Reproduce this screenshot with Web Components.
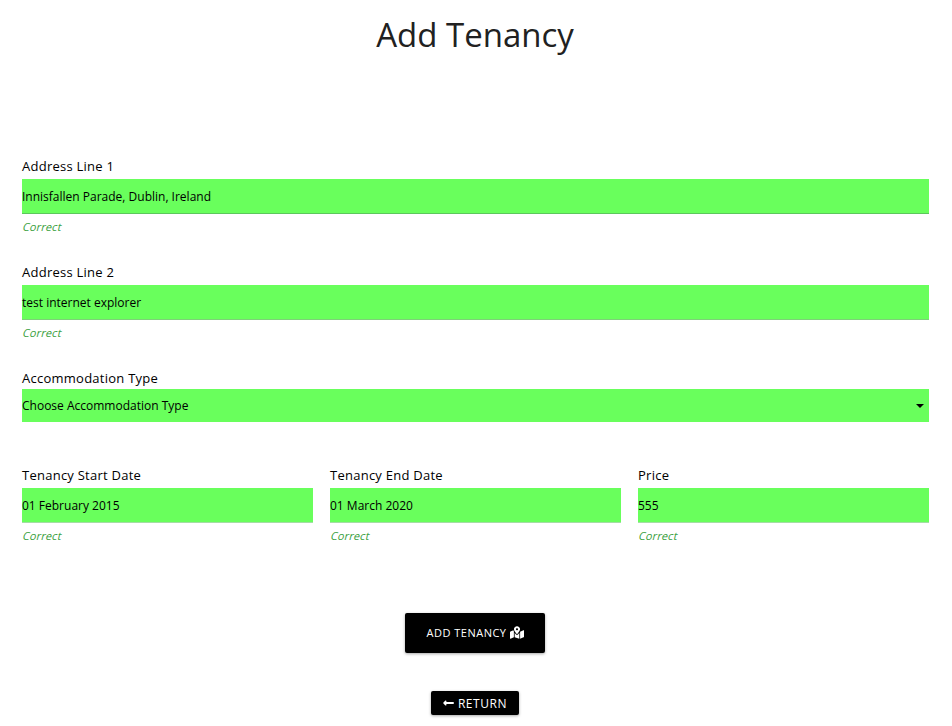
<!DOCTYPE html>
<html lang="en"><head><meta charset="utf-8"><title>Add Tenancy</title>
<style>
body{margin:0;background:#fff;color:#000;font-family:"Open Sans","Noto Sans",sans-serif}
</style></head><body>
<tenancy-page>
<form-field label="Address Line 1" value="Innisfallen Parade, Dublin, Ireland" hint="Correct" style="--line:#5cc75c"></form-field>
<form-field label="Address Line 2" value="test internet explorer" hint="Correct" style="--line:#7fcf7a"></form-field>
<select-field label="Accommodation Type" value="Choose Accommodation Type"></select-field>
<field-row>
<form-field label="Tenancy Start Date" value="01 February 2015" hint="Correct"></form-field>
<form-field label="Tenancy End Date" value="01 March 2020" hint="Correct"></form-field>
<form-field label="Price" value="555" hint="Correct"></form-field>
</field-row>
<action-button slot="actions" class="primary">ADD TENANCY<svg slot="after" width="14" height="13" viewBox="0 0 576 512" fill="#fff"><path d="M288 0c-69.59 0-126 56.41-126 126 0 56.26 82.35 158.8 113.9 196.02 6.39 7.54 17.82 7.54 24.2 0C331.65 284.8 414 182.26 414 126 414 56.41 357.59 0 288 0zm0 168c-23.2 0-42-18.8-42-42s18.8-42 42-42 42 18.8 42 42-18.8 42-42 42zM20.12 215.95A32.006 32.006 0 0 0 0 245.66v250.32c0 11.32 11.43 19.06 21.94 14.86L160 448V214.92c-8.84-15.98-16.07-31.54-21.25-46.42L20.12 215.95zM288 359.67c-14.07 0-27.38-6.18-36.51-16.96-19.66-23.2-40.57-49.62-59.49-76.72v182l192 64V266c-18.92 27.09-39.82 53.52-59.49 76.72-9.13 10.77-22.44 16.95-36.51 16.95zm266.06-198.51L416 224v288l139.88-55.95A31.996 31.996 0 0 0 576 426.34V176.02c0-11.32-11.43-19.06-21.94-14.86z"/></svg></action-button>
<action-button slot="actions" class="small"><svg slot="before" width="11" height="12" viewBox="0 0 448 512" fill="#fff"><path d="M134.059 296H436c6.627 0 12-5.373 12-12v-56c0-6.627-5.373-12-12-12H134.059v-46.059c0-21.382-25.851-32.09-40.971-16.971L7.029 239.029c-9.373 9.373-9.373 24.569 0 33.941l86.059 86.059c15.119 15.119 40.971 4.411 40.971-16.971V296z"/></svg>RETURN</action-button>
</tenancy-page>
<script>
const define=(name,html)=>customElements.define(name,class extends HTMLElement{
  connectedCallback(){
    if(this.shadowRoot)return;
    this.attachShadow({mode:"open"}).innerHTML=html;
    this.shadowRoot.querySelectorAll("[data-attr]").forEach(n=>n.textContent=this.getAttribute(n.dataset.attr));
  }
});
const fieldCss=`
:host{display:block}
.label{font-size:13px;line-height:18px;letter-spacing:.25px;white-space:nowrap}
.box{box-sizing:border-box;display:flex;align-items:flex-start;background:#69ff5c;font-size:12px;line-height:17px;white-space:nowrap}`;
define("tenancy-page",`<style>
:host{display:block;box-sizing:border-box;height:726px;overflow:hidden;padding:0 23px 0 22px}
h1{margin:0;padding:12px 1px 0 0;height:157px;box-sizing:border-box;text-align:center;font-weight:400;font-size:33px;line-height:45px;color:#212121}
.actions{display:flex;flex-direction:column;align-items:center;gap:38px;padding-top:69px;margin-right:1px}
</style><h1>Add Tenancy</h1><slot></slot><div class="actions"><slot name="actions"></slot></div>`);
define("form-field",`<style>${fieldCss}
:host{height:106px}
.box{height:35px;margin-top:4px;padding-top:9px;border-bottom:1px solid var(--line,#a5dca5)}
.hint{margin-top:5px;font-size:11px;line-height:16px;letter-spacing:.12px;transform:skewX(-14deg);transform-origin:0 12px;color:#39a03d}
</style><div class="label" data-attr="label"></div><div class="box" data-attr="value"></div><div class="hint" data-attr="hint"></div>`);
define("select-field",`<style>${fieldCss}
:host{height:97px}
.box{height:33px;margin-top:2px;padding:8px 5px 0 0;justify-content:space-between}
svg{display:block;margin-top:7px}
</style><div class="label" data-attr="label"></div><div class="box"><span data-attr="value"></span><svg width="8" height="4" viewBox="0 0 8 4"><path d="M0 0H8L4 4Z"/></svg></div>`);
define("field-row",`<style>
:host{display:grid;grid-template-columns:repeat(3,1fr);gap:17px;height:78px}
</style><slot></slot>`);
define("action-button",`<style>
:host{display:flex;box-sizing:border-box;align-items:center;justify-content:center;background:#000;color:#fff;border-radius:2px;box-shadow:0 1px 3px rgba(0,0,0,.35);white-space:nowrap}
:host(.primary){width:140px;height:40px;padding-bottom:2px;font-size:11px;letter-spacing:.5px;gap:3px}
:host(.small){width:88px;height:24px;font-size:12px;letter-spacing:.55px;gap:4px}
</style><slot name="before"></slot><span><slot></slot></span><slot name="after"></slot>`);
</script>
</body></html>
